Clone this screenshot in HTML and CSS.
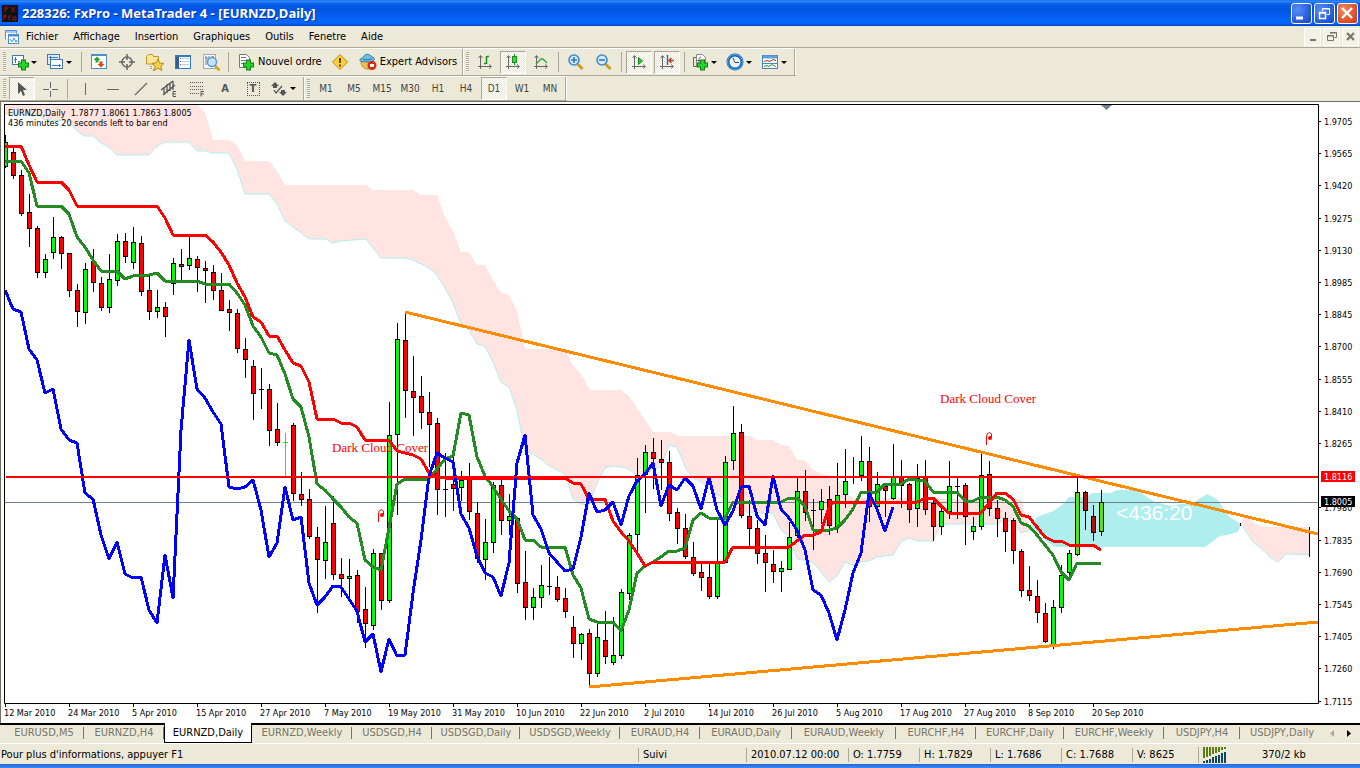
FILE: index.html
```html
<!DOCTYPE html>
<html lang="fr">
<head>
<meta charset="utf-8">
<title>228326: FxPro - MetaTrader 4 - [EURNZD,Daily]</title>
<link rel="stylesheet" href="styles.css">
</head>
<body>
<div class="app">
  <header class="titlebar">
    <svg class="logo" width="16" height="17" viewBox="0 0 16 17"><rect width="16" height="17" fill="#151010"/><path d="M3 7V2h4M3 4h3M9 2l4 5M13 2L9 7" stroke="#8e1c1c" fill="none"/><path d="M2 15v-5h2v2H2M7 15v-4h2M11 12h3v3h-3z" stroke="#8e1c1c" fill="none"/></svg>
    <h1>228326: FxPro - MetaTrader 4 - [EURNZD,Daily]</h1>
    <div class="window-buttons">
      <button aria-label="Minimize"><svg width="21" height="21"><path d="M5 15h7" stroke="#fff" stroke-width="3"/></svg></button>
      <button aria-label="Restore"><svg width="21" height="21"><path d="M8.500 8V5.500h7v6H13M8 6h8" stroke="#fff" fill="none"/><path d="M5.500 9.500h6v6h-6zM5 10h7" stroke="#fff" fill="none" stroke-width="1.500"/></svg></button>
      <button class="close" aria-label="Close"><svg width="21" height="21"><path d="M5 5l10 10M15 5L5 15" stroke="#fff" stroke-width="2.400"/></svg></button>
    </div>
  </header>

  <nav class="menubar">
    <svg class="menu-icon" width="16" height="16" viewBox="0 0 16 16"><path d="M1.500 10.500v-9h11v3M1.500 3h11" fill="#fff" stroke="#4a90d9"/><rect x="4.500" y="5.500" width="10" height="9" fill="#fff" stroke="#4a90d9"/><path d="M4 6.500h11" stroke="#4a90d9" stroke-width="2"/><path d="M6 10l2 3 2-4 2 4 1-2" fill="none" stroke="#4a90d9"/></svg>
    <button>Fichier</button><button>Affichage</button><button>Insertion</button><button>Graphiques</button><button>Outils</button><button>Fenetre</button><button>Aide</button>
    <div class="mdi-buttons">
      <button aria-label="Minimize chart"><svg width="16" height="16"><path d="M5 11h6" stroke="#77756a" stroke-width="2"/></svg></button>
      <button aria-label="Restore chart"><svg width="16" height="16"><path d="M6.500 5V3.500h6v5h-2M6 4h7" stroke="#77756a" fill="none"/><path d="M3.500 6.500h6v5h-6zM3 7h7" stroke="#77756a" fill="none"/></svg></button>
      <button aria-label="Close chart"><svg width="16" height="16"><path d="M4 4l7 7M11 4l-7 7" stroke="#77756a" stroke-width="2.200"/></svg></button>
    </div>
  </nav>

  <div class="toolbar-row">
    <div class="toolbar">
      <i class="grip"></i>
      <button class="tool drop" aria-label="New chart"><svg width="18" height="18"><rect x="1.500" y="2.500" width="11" height="9" fill="#fff" stroke="#3f78b5"/><path d="M4.500 4v6M3 6.500h3M7 8.500h2" stroke="#3f78b5"/><path d="M7 12h11M12.500 6.500v11" stroke="#1a7a1a" stroke-width="5"/><path d="M8 12h9M12.500 7.500v9" stroke="#22d52b" stroke-width="3"/></svg></button>
      <button class="tool drop" aria-label="Profiles"><svg width="18" height="18"><rect x="1.500" y="1.500" width="12" height="10" fill="#dcebfa" stroke="#3f78b5"/><rect x="4.500" y="6.500" width="12" height="9" fill="#fff" stroke="#3f78b5"/><path d="M3 4.500h9M6 12.500h9M4.500 3v3M13.500 11v3" stroke="#3f78b5"/></svg></button>
      <i class="sep"></i>
      <button class="tool" aria-label="Market watch"><svg width="18" height="18"><rect x="1.500" y="1.500" width="15" height="14" fill="#fff" stroke="#4a8fd0"/><path d="M2 2h14" stroke="#4a8fd0" stroke-width="2"/><path d="M5.500 9.500V7H3.500L7 3.500 10.500 7h-2v2.500z" fill="#25a82e"/><path d="M9.500 8.500V11h-2l3.500 3.500 3.500-3.500h-2V8.500z" fill="#e2411e"/></svg></button>
      <button class="tool" aria-label="Data window"><svg width="18" height="18"><circle cx="9" cy="9" r="5" fill="none" stroke="#666" stroke-width="1.500"/><path d="M9 1v6M9 11v6M1 9h6M11 9h6" stroke="#666" stroke-width="1.500"/></svg></button>
      <button class="tool" aria-label="Navigator"><svg width="20" height="19"><path d="M1.500 11V3.500l2-2h4l1 2h5V11z" fill="#f9e59a" stroke="#bd9827"/><path d="M6 13v4M8 17h2" stroke="#555" stroke-dasharray="1 1"/><path d="M13 6l1.700 4 4.300.4-3.200 2.800 1 4.300-3.800-2.300-3.700 2.300 1-4.300L7 10.400l4.300-.4z" fill="#f8d24b" stroke="#b78918"/></svg></button>
      <button class="tool" aria-label="Terminal"><svg width="18" height="18"><rect x="1.500" y="2.500" width="15" height="13" fill="#fff" stroke="#2f7ac5"/><path d="M2 3h14" stroke="#2f7ac5" stroke-width="2"/><path d="M3.500 4v11" stroke="#2b5f9c" stroke-width="3"/><path d="M6 5.500h1M6 8.500h1M6 11.500h1" stroke="#c33"/><path d="M8 5.500h7M8 8.500h7M8 11.500h7" stroke="#b9d3ea"/></svg></button>
      <button class="tool" aria-label="Strategy tester"><svg width="19" height="19"><rect x="1.500" y="1.500" width="12" height="14" fill="#f5f7f9" stroke="#9aaab8"/><path d="M4 3v9M7 3v6M11 3v4M3 5h3M9 4h3" stroke="#6f8190"/><circle cx="10" cy="9" r="4.500" fill="#c5e3f7" stroke="#5c9bcb" stroke-width="1.500"/><path d="M13.500 13l4 4.500" stroke="#d1a321" stroke-width="2.500"/></svg></button>
      <i class="sep"></i>
      <button class="tool wide"><svg width="18" height="18"><path d="M2.500 1.500h7l3 3v10h-10z" fill="#fff" stroke="#777"/><path d="M4 4.500h5M4 7.500h7M4 10.500h3" stroke="#777"/><path d="M6 12h11M11.500 6.500v11" stroke="#1a7a1a" stroke-width="5"/><path d="M7 12h9M11.500 7.500v9" stroke="#22d52b" stroke-width="3"/></svg>Nouvel ordre</button>
      <button class="tool" aria-label="MetaEditor"><svg width="18" height="18"><path d="M9 1.500L16.500 9 9 16.500 1.500 9z" fill="#f8d03a" stroke="#bb8b12"/><path d="M9 5v5M9 11.500v2" stroke="#5d470d" stroke-width="2"/></svg></button>
      <button class="tool wide"><svg width="18" height="18"><path d="M2 8c0 5 3 8 7 8s7-3 6-8z" fill="#efc14b" stroke="#b98a1e"/><path d="M1 6c2-1 3-1 4-3s5-2.500 7 0l3 2c2 2-2 4-7 4S0 8 1 6z" fill="#70bce2" stroke="#3481ad"/><path d="M4 6c3 1.500 6 1 9-.5" fill="none" stroke="#2a6f9c"/><circle cx="13" cy="12.500" r="4.500" fill="#dc2a18"/><rect x="11" y="11" width="4" height="3" fill="#fff"/></svg>Expert Advisors</button>
      <i class="end"></i>
      <i class="grip"></i>
      <button class="tool" aria-label="Bar chart"><svg width="18" height="18"><path d="M4.500 3v13M2 13.500h13M2.500 5l2-2.500 2 2.500M13 11.500l2.500 2-2.500 2" fill="none" stroke="#666"/><path d="M10.500 3v8M11 3.500h2M8 10.500h2" stroke="#17911c" stroke-width="1.500"/></svg></button>
      <button class="tool pressed" aria-label="Candlesticks"><svg width="18" height="18"><path d="M4.500 3v13M2 13.500h13M2.500 5l2-2.500 2 2.500M13 11.500l2.500 2-2.500 2" fill="none" stroke="#666"/><path d="M10.500 1v11" stroke="#17911c"/><rect x="8.500" y="3.500" width="4" height="6" fill="#3bd747" stroke="#17911c"/></svg></button>
      <button class="tool" aria-label="Line chart"><svg width="18" height="18"><path d="M4.500 3v13M2 13.500h13M2.500 5l2-2.500 2 2.500M13 11.500l2.500 2-2.500 2" fill="none" stroke="#666"/><path d="M4 11l5-5h2l4 4" fill="none" stroke="#38a03d" stroke-width="1.300"/></svg></button>
      <i class="sep"></i>
      <button class="tool" aria-label="Zoom in"><svg width="18" height="18"><path d="M10.500 11l5 5" stroke="#cc9d1e" stroke-width="3"/><circle cx="7" cy="7" r="5" fill="#d6ecfb" stroke="#3f8bc8" stroke-width="1.600"/><path d="M4 7h6M7 4v6" stroke="#2f76b4" stroke-width="1.600"/></svg></button>
      <button class="tool" aria-label="Zoom out"><svg width="18" height="18"><path d="M10.500 11l5 5" stroke="#cc9d1e" stroke-width="3"/><circle cx="7" cy="7" r="5" fill="#d6ecfb" stroke="#3f8bc8" stroke-width="1.600"/><path d="M4 7h6" stroke="#2f76b4" stroke-width="1.600"/></svg></button>
      <i class="sep"></i>
      <button class="tool pressed" aria-label="Auto scroll"><svg width="18" height="18"><path d="M4.500 3v13M2 13.500h13M2.500 5l2-2.500 2 2.500M13 11.500l2.500 2-2.500 2" fill="none" stroke="#666"/><path d="M8.500 4.500v7l4-3.500z" fill="#2cc238" stroke="#17911c"/></svg></button>
      <button class="tool pressed" aria-label="Chart shift"><svg width="18" height="18"><path d="M4.500 3v13M2 13.500h13M2.500 5l2-2.500 2 2.500M13 11.500l2.500 2-2.500 2" fill="none" stroke="#666"/><path d="M9.500 2v10" stroke="#2a6cb0" stroke-width="1.500"/><path d="M11 7.500h5M13.500 5L11 7.500l2.500 2.500" stroke="#c3411b" fill="none" stroke-width="1.500"/></svg></button>
      <i class="sep"></i>
      <button class="tool drop" aria-label="Indicators"><svg width="18" height="18"><path d="M5.500 1.500h6l3 3v9h-9z" fill="#fff" stroke="#888"/><path d="M5 4.500H2.500v9H7M10 4c-2 0-2 1-2 3v4M6 7.500h4" fill="none" stroke="#666"/><path d="M6 12h11M11.500 6.500v11" stroke="#1a7a1a" stroke-width="5"/><path d="M7 12h9M11.500 7.500v9" stroke="#22d52b" stroke-width="3"/></svg></button>
      <button class="tool drop" aria-label="Periods"><svg width="18" height="18"><circle cx="9" cy="9" r="7" fill="#e9f5ff" stroke="#1763b5" stroke-width="3"/><circle cx="9" cy="9" r="7.500" fill="none" stroke="#5aa8ea"/><path d="M7 5l2 4.500h4" fill="none" stroke="#444"/></svg></button>
      <button class="tool drop" aria-label="Templates"><svg width="18" height="18"><rect x="1.500" y="2.500" width="15" height="13" fill="#fff" stroke="#4585c0"/><path d="M2 4h14" stroke="#5f9fda" stroke-width="3"/><path d="M2 10.500h14" stroke="#4585c0"/><path d="M3 8.500l3-1 3 1 3-2 3 1" fill="none" stroke="#a13427"/><path d="M3 13.500l3-1 2 1 3-2 4 2" fill="none" stroke="#2c9632"/></svg></button>
      <i class="end"></i>
    </div>
  </div>

  <div class="toolbar-row">
    <div class="toolbar">
      <i class="grip"></i>
      <button class="tool pressed" aria-label="Cursor"><svg width="18" height="18"><path d="M5 2v12l3-3 2 5 2-1-2-5h4z" fill="#555"/></svg></button>
      <button class="tool" aria-label="Crosshair"><svg width="18" height="18"><path d="M9.500 2v6M9.500 11v6M2 9.500h6M11 9.500h6" stroke="#666"/></svg></button>
      <i class="sep"></i>
      <button class="tool" aria-label="Vertical line"><svg width="18" height="18"><path d="M9.500 3v12" stroke="#666"/></svg></button>
      <button class="tool" aria-label="Horizontal line"><svg width="18" height="18"><path d="M3 9.500h12" stroke="#666"/></svg></button>
      <button class="tool" aria-label="Trendline"><svg width="18" height="18"><path d="M3 15L15 3" stroke="#666" stroke-width="1.300"/></svg></button>
      <button class="tool" aria-label="Equidistant channel"><svg width="18" height="18"><path d="M1 10L13 1M3 15L15 5M4 7v8M7 4v9M10 3v8M13 1v9" stroke="#555" stroke-width="1.300"/><path d="M16 11.500h-3v5h3M13 14h3" fill="none" stroke="#555"/></svg></button>
      <button class="tool" aria-label="Fibonacci"><svg width="18" height="18"><path d="M2 2.500h13M2 6.500h13M2 9.500h13M2 13.500h9" stroke="#555" stroke-dasharray="1 1"/><path d="M16 11.500h-3v5M13 14h3" fill="none" stroke="#555"/></svg></button>
      <button class="tool letter">A</button>
      <button class="tool letter boxed" aria-label="Text label"><span>T</span></button>
      <button class="tool drop" aria-label="Arrows"><svg width="18" height="18"><path d="M5 2L1 6h2v2h4V6h2zM13 16l4-4h-2v-2h-4v2H9z" fill="#555"/><path d="M4 10l2 3 6-7" fill="none" stroke="#555" stroke-width="1.300"/></svg></button>
      <i class="end"></i>
      <i class="grip"></i>
      <button class="period">M1</button><button class="period">M5</button><button class="period">M15</button><button class="period">M30</button><button class="period">H1</button><button class="period">H4</button><button class="period pressed">D1</button><button class="period">W1</button><button class="period">MN</button>
      <i class="end"></i>
    </div>
  </div>

  <main class="workspace">
    <svg id="chart" class="chart" viewBox="4 104 1352 616" role="img" aria-label="EURNZD, Daily"></svg>
  </main>

  <nav class="tabs">
    <button class="h4">EURUSD,M5</button><button class="h4">EURNZD,H4</button><button class="daily active">EURNZD,Daily</button><button class="weekly">EURNZD,Weekly</button><button class="h4">USDSGD,H4</button><button class="daily">USDSGD,Daily</button><button class="weekly">USDSGD,Weekly</button><button class="h4">EURAUD,H4</button><button class="daily long">EURAUD,Daily</button><button class="weekly long">EURAUD,Weekly</button><button class="h4">EURCHF,H4</button><button class="daily">EURCHF,Daily</button><button class="weekly">EURCHF,Weekly</button><button class="h4 short">USDJPY,H4</button><button class="daily last">USDJPY,Daily</button>
    <button class="scroll" aria-label="Previous tabs"><svg width="5" height="7"><path d="M4 0v7L0 3.500z" fill="#aaa899"/></svg></button>
    <button class="scroll" aria-label="Next tabs"><svg width="5" height="7"><path d="M1 0v7l4-3.500z" fill="#000"/></svg></button>
  </nav>

  <footer class="status">
    <span class="hint">Pour plus d'informations, appuyer F1</span>
    <span class="profile">Suivi</span>
    <span class="time">2010.07.12 00:00</span>
    <span class="price">O: 1.7759</span>
    <span class="price">H: 1.7829</span>
    <span class="price">L: 1.7686</span>
    <span class="price">C: 1.7688</span>
    <span class="volume">V: 8625</span>
    <span class="traffic"><svg width="24" height="16" viewBox="0 0 24 16"><path d="M1 0v11M4 0v10M7 0v9M10 0v7M13 0v6M16 0v5M19 0v3M22 0v2" stroke="#5d7d12" stroke-width="2"/><path d="M1 14v2M4 13v3M7 12v4M10 10v6M13 9v7M16 8v8M19 6v10M22 5v11" stroke="#12485f" stroke-width="2"/></svg><b>370/2 kb</b></span>
  </footer>
  <div class="taskbar-edge"></div>
</div>
<script src="chart.js"></script>
</body>
</html>
```
FILE: styles.css
```css
* { box-sizing: border-box; }
body {
  margin: 0;
  background: #ece9d8;
  color: #000;
  font: 11px/14px "DejaVu Sans Condensed", "Noto Sans", sans-serif;
}
button {
  margin: 0;
  padding: 0;
  border: 0;
  background: none;
  color: inherit;
  font: inherit;
}
svg { display: block; }
.app { display: flex; flex-direction: column; min-height: 100vh; }

.titlebar {
  display: flex;
  align-items: center;
  gap: 4px;
  height: 26px;
  padding: 0 2px;
  background: linear-gradient(#0a5ce0 0, #3c93ff 1px, #1b78f5 2px, #0459e6 5px, #0054e3 10px, #0560f4 17px, #0568ff 22px, #0460f0 24px, #0240b8 26px);
  color: #fff;
}
.titlebar h1 {
  flex: 1;
  margin: 0;
  font: bold 13px/16px "Noto Sans", sans-serif;
  text-shadow: 1px 1px #0a2f9a;
}
.window-buttons { display: flex; gap: 2px; }
.window-buttons button {
  width: 21px;
  height: 21px;
  border: 1px solid #fff;
  border-radius: 3px;
  background: radial-gradient(circle at 30% 30%, #5b8df5, #2257d8 70%, #1c4ac4);
}
.window-buttons svg { margin: -1px; }
.window-buttons .close { background: radial-gradient(circle at 30% 30%, #ee8865, #dc4c22 70%, #b93a10); }

.menubar {
  display: flex;
  align-items: center;
  height: 22px;
  padding: 0 1px 0 4px;
  border-bottom: 1px solid #aca899;
}
.menu-icon { margin-right: 6px; }
.menubar > button { margin-right: 15px; }
.mdi-buttons { display: flex; gap: 2px; margin-left: auto; }
.mdi-buttons button { border: 1px solid #fff; background: #f3f1e6; }
.mdi-buttons svg { width: 15px; height: 16px; }

.toolbar-row { display: flex; height: 28px; }
.toolbar-row + .toolbar-row { height: 25px; }
.toolbar {
  display: flex;
  align-items: center;
  border-top: 1px solid #fff;
  border-bottom: 1px solid #aca899;
  padding-left: 3px;
}
.grip {
  width: 3px;
  height: 20px;
  margin-right: 3px;
  background: repeating-linear-gradient(#aca899 0 1px, #f6f4ea 1px 2px);
}
.sep { width: 1px; height: 20px; margin: 0 4px 0 2px; background: #aca899; }
.end { align-self: stretch; width: 2px; margin-right: 2px; border-left: 1px solid #aca899; background: #fff; }
.end:last-child { margin-right: 0; }
.tool, .period {
  display: flex;
  align-items: center;
  justify-content: center;
  width: 26px;
  height: 23px;
  margin-right: 2px;
  border: 1px solid transparent;
}
.tool svg { flex: none; }
.drop { width: 33px; gap: 2px; justify-content: flex-start; padding-left: 1px; }
.drop::after {
  content: "";
  border: 3px solid transparent;
  border-top-color: #000;
  border-bottom: 0;
}
.wide { width: auto; gap: 3px; padding: 0 2px 0 3px; white-space: nowrap; }
.pressed {
  border-color: #aca899 #fff #fff #aca899;
  background: repeating-conic-gradient(#fff 0 25%, #ece9d8 0 50%) 0 0 / 2px 2px;
}
.letter { color: #555; font-weight: bold; }
.boxed span { width: 13px; border: 1px dotted #555; line-height: 12px; }
.period { color: #444; font-size: 10px; }

.workspace {
  flex: 1;
  padding: 2px 4px 2px 3px;
  border-top: 1px solid #716f64;
  border-left: 1px solid #716f64;
  background: #fff;
}
.chart { width: 100%; height: auto; }
.cloud-pink { fill: #ffe4e1; }
.cloud-aqua { fill: #afeeee; }
.cloud-edge { fill: none; stroke: #afeeee; }
.line { fill: none; stroke-width: 3; stroke-linejoin: round; }
.axis { stroke: #000; fill: none; }
.label { font: 9px "DejaVu Sans Condensed", "Noto Sans", sans-serif; }
.label-light { fill: #fff; }
.pattern { font: 13px "Liberation Serif", serif; fill: #f00; }
.countdown { font: 21px "Liberation Sans", sans-serif; fill: #fff; }

.tabs {
  display: flex;
  height: 20px;
  padding-left: 4px;
  border-top: 2px solid #000;
  color: #77756a;
}
.tabs button { position: relative; height: 16px; white-space: nowrap; }
.tabs button:not(.active, .scroll, .last)::after {
  content: "";
  position: absolute;
  right: 0;
  top: 2px;
  height: 12px;
  border-right: 1px solid #77756a;
}
.h4 { width: 80px; }
.h4.short { width: 76px; }
.daily { width: 88px; }
.daily.long { width: 92px; }
.weekly { width: 100px; }
.weekly.long { width: 104px; }
.tabs .active {
  height: 20px;
  margin-top: -2px;
  border: 1px solid #000;
  border-top: 0;
  background: #fff;
  color: #000;
}
.tabs .daily.last { flex: 1; max-width: 84px; }
.scroll { display: flex; align-items: center; justify-content: center; width: 16px; }

.status {
  display: flex;
  align-items: center;
  height: 21px;
  padding-top: 2px;
  border-top: 1px solid #fff;
}
.status span { white-space: nowrap; }
.status span + span { border-left: 1px solid #aca899; padding-left: 4px; }
.status .hint { flex: 1; padding-left: 1px; }
.profile { width: 108px; }
.time { width: 102px; }
.price { width: 71px; }
.volume { width: 66px; }
.traffic { display: flex; align-items: center; gap: 35px; width: 162px; }
.traffic b { font-weight: normal; }
.taskbar-edge { height: 4px; background: linear-gradient(#2466d8, #3c8cf0); }
```
FILE: chart.js
```javascript
const svg = document.getElementById("chart");
const NS = "http://www.w3.org/2000/svg";

function add(name, attrs, text) {
  const el = document.createElementNS(NS, name);
  for (const key in attrs) el.setAttribute(key, attrs[key]);
  if (text !== undefined) el.textContent = text;
  svg.appendChild(el);
  return el;
}

const cloudTop = "5,105 197,105 205,112 213,140 229,140 237,145 245,161 269,161 277,171 285,185 366,185 373,190 413,190 421,195 437,195 445,217 453,231 461,252 469,252 477,265 485,265 493,280 501,293 509,295 517,311 525,349 565,349 573,366 581,374 590,390 621,390 629,396 637,408 645,420 653,432 670,432 678,436 750,436 757,440 773,440 781,445 789,446 797,460 805,460 813,470 821,474 830,476 837,477 845,492 853,498 1021,499 1026,517 1031,528";
const cloudBottom = "5,114 37,114 45,120 69,121 77,131 85,136 93,136 101,143 109,147 117,155 149,155 157,146 165,142 189,142 197,151 205,151 213,153 229,153 237,169 245,194 269,194 277,204 285,221 309,239 326,239 333,243 341,241 366,239 381,258 405,258 413,260 429,268 437,275 445,288 453,303 461,324 469,330 477,344 485,346 493,362 501,382 509,387 517,410 525,451 533,454 541,459 549,466 565,474 573,499 581,504 589,505 597,483 605,468 613,466 627,468 637,475 645,475 653,469 661,467 669,445 677,447 685,467 693,478 701,482 709,487 717,495 725,498 730,508 743,510 749,513 773,513 781,530 789,537 797,559 813,562 829,582 837,576 845,562 853,565 861,562 869,561 877,557 893,555 901,542 909,538 917,541 933,541 941,524 997,524 1005,520 1013,521 1021,533 1031,530";

const reversed = s => s.split(" ").reverse().join(" ");
add("polygon", { class: "cloud-pink", "shape-rendering": "crispEdges", points: cloudTop + " " + reversed(cloudBottom) });
add("polyline", { class: "cloud-edge", points: cloudBottom });
add("polygon", { class: "cloud-aqua", points: "1029,530 1037,517 1045,514 1053,511 1061,506 1069,497 1085,497 1093,493 1110,493 1117,490 1137,490 1147,497 1153,501 1163,504 1172,506 1180,504 1193,503 1207,494 1218,500 1228,516 1241,524 1238,532 1227,535 1220,536 1205,547 1055,547 1047,542 1038,532" });
add("polygon", { class: "cloud-pink", points: "1241,524 1243,518 1247,516 1254,523 1263,527 1309,527 1309,556 1286,554 1278,562 1270,557 1262,549 1253,542 1247,533" });
add("polyline", { class: "cloud-edge", points: "1241,524 1247,533 1253,542 1262,549 1270,557 1278,562 1286,554 1309,554" });
add("path", { class: "axis", d: "M1309.5 527V557M1240.500 523v3" });
add("path", { d: "M4 502.500H1318", stroke: "#708090" });

/* color, high, body top, body bottom, low; one bar every 8 units */
const bars = `g135,142,166,167 r148,152,175,178 r170,175,213,215 r194,212,228,246 r226,228,272,277 g254,259,272,277 g217,237,252,258 r236,237,253,268
r253,253,290,296 r284,290,311,326 g263,269,312,323 r249,261,282,291 r277,283,307,310 g254,279,307,312 g234,241,280,285 r233,241,256,262
g227,242,262,268 r236,243,291,295 r276,290,311,319 g290,307,311,317 r302,307,316,336 g258,263,283,294 r249,264,266,280 g237,258,265,269
r256,259,267,291 r261,268,270,302 r265,272,290,299 r273,290,310,310 r300,309,312,330 r309,313,348,352 r338,349,359,377 r360,366,393,419
k368,389,389,408 r384,389,430,445 r403,429,442,445 l433,442,442,475 r423,425,493,500 r472,494,499,505 r489,499,536,538 r527,537,559,612
g506,542,560,578 r496,523,574,579 r558,574,578,596 g559,576,578,598 r570,575,611,622 r587,609,623,647 g549,553,625,629 r553,553,600,609
g402,435,600,602 g323,339,434,514 r312,340,390,417 r356,391,397,435 r376,396,412,428 r392,412,424,466 r418,423,489,514 k453,489,489,516
r446,484,488,510 g471,480,487,500 r463,478,511,519 r502,513,558,562 g519,542,559,579 g482,485,542,552 r480,485,520,534 g494,516,520,534
r518,518,583,592 r551,582,607,619 g588,597,607,619 g565,585,597,607 k557,586,586,594 r576,587,599,601 r588,598,611,617 r616,627,643,657
g633,634,643,659 r629,633,673,687 g623,637,673,676 r611,640,656,663 g617,655,662,664 g589,592,655,658 g533,535,593,599 g458,475,534,550
g445,452,474,512 r438,452,458,488 r440,459,462,489 r451,462,513,520 r508,512,528,543 r514,528,556,558 r542,557,573,575 r563,572,577,590
r563,577,596,598 g518,563,596,598 g456,462,562,562 g406,433,460,469 r424,432,515,517 r500,516,528,547 r520,528,553,563 r535,553,562,591
r550,564,571,582 g561,568,571,591 g522,537,569,569 g478,491,535,537 r470,491,512,520 k499,510,510,549 g489,501,509,523 r486,499,525,534
g463,495,527,532 g449,481,494,507 k457,476,476,483 g436,461,475,480 r447,461,506,521 g472,484,506,507 r483,486,490,516 g444,477,498,499
r460,477,485,507 r483,484,509,522 g464,478,508,526 r460,477,509,514 r500,503,526,540 g507,511,526,534 g461,486,511,518 k477,486,486,518
r483,485,516,544 g517,526,531,539 g453,475,526,529 r461,474,508,515 r500,508,518,536 r512,518,531,551 r518,520,550,563 r549,551,590,596
r566,590,595,600 r580,596,612,622 r603,613,641,642 g600,607,645,648 g565,575,607,612 g550,553,572,577 G477,492,554,555 R491,492,510,529
R505,516,532,540 G490,502,531,535`.split(/\s+/);
const fills = { g: "#00ff00", r: "#ff0000", G: "#50e411", R: "#b01111" };

bars.forEach((bar, i) => {
  const x = 5 + i * 8;
  const kind = bar[0];
  const [high, top, bottom, low] = bar.slice(1).split(",").map(Number);
  const ink = kind === "l" ? "#00ff00" : "#000";
  add("path", { d: `M${x + 0.5} ${high}V${low + 1}`, stroke: ink });
  if (fills[kind]) {
    add("rect", { x: x - 1.5, y: top + 0.5, width: 4, height: Math.max(bottom - top, 1), fill: fills[kind], stroke: "#000" });
  } else {
    add("path", { d: `M${x - 2} ${top + 0.5}h5`, stroke: ink });
  }
});

const kijun = "5,146 21,146 29,165 37,182 61,182 69,190 77,206 157,206 165,218 173,235 205,235 213,242 221,252 229,265 237,283 245,297 253,317 261,322 269,336 277,336 285,350 293,363 301,366 309,382 317,419 333,419 341,423 349,423 357,427 365,440 389,440 397,451 405,453 413,455 421,459 429,473 437,477 445,478 565,478 573,483 581,484 589,499 605,499 613,521 621,532 629,541 637,553 645,566 653,562 725,562 733,547 789,547 797,541 805,535 813,535 821,532 829,507 833,502 917,502 925,498 933,498 941,506 949,513 981,513 989,503 997,493 1005,493 1013,499 1021,515 1029,517 1037,527 1045,537 1053,541 1061,541 1069,545 1093,545 1101,550";
const tenkan = "5,161 21,161 29,173 37,206 61,206 69,214 77,237 85,247 93,260 101,271 117,271 125,279 133,276 149,275 157,273 165,281 197,281 205,284 229,284 237,293 245,305 253,326 261,337 269,353 277,355 285,374 293,399 301,407 309,437 317,484 325,490 333,499 341,507 349,517 357,523 365,560 373,567 381,570 389,528 397,484 405,479 429,479 437,469 445,459 453,456 461,413 469,415 477,457 485,476 493,487 501,499 509,511 517,519 525,540 533,540 541,547 565,547 573,575 581,588 589,619 597,622 613,622 621,631 629,610 637,573 645,566 653,562 661,557 669,551 677,551 685,548 693,520 701,513 709,518 725,518 733,502 781,502 789,498 797,498 805,506 813,530 829,530 837,528 845,520 853,509 861,492 869,492 877,492 885,484 901,484 909,479 925,481 933,492 957,492 965,501 973,501 981,497 997,497 1005,500 1013,506 1021,523 1029,526 1037,535 1045,545 1053,555 1061,572 1069,580 1077,563 1101,563";
const chikou = "5,290 13,309 21,312 29,349 37,360 45,393 53,389 61,429 69,440 77,443 85,493 93,499 101,535 109,559 117,542 125,574 133,578 141,577 149,610 157,623 165,555 173,598 181,430 189,340 197,389 205,398 213,412 221,424 229,487 237,489 245,487 253,480 261,510 269,557 277,543 285,487 293,520 301,517 309,583 317,605 325,597 333,586 341,587 349,599 357,611 365,642 373,634 381,672 389,639 397,656 405,655 413,593 421,540 429,476 437,453 445,458 453,462 461,514 469,528 477,556 485,573 493,577 501,596 509,563 517,463 525,435 533,515 541,529 549,553 557,562 565,571 573,569 581,537 589,493 597,512 605,510 613,502 621,525 629,496 637,481 645,474 653,463 661,506 669,485 677,490 685,478 693,486 701,509 709,477 717,510 725,525 733,511 741,487 749,486 757,516 765,525 773,476 781,509 789,518 797,530 805,550 813,590 821,595 829,613 837,640 845,610 853,573 861,553 869,493 877,509 885,531 893,507";
const line = (points, stroke) => add("polyline", { class: "line", "shape-rendering": "crispEdges", points, stroke });
line(tenkan, "#228b22");
line(kijun, "#ff0000");
line(chikou, "#0000ff");
line("405,312 1318,534", "#ff8c00");
line("589,687 1318,622", "#ff8c00");
add("path", { d: "M6 477H1318", stroke: "#f00", "stroke-width": 2 });

for (const [x, y] of [[986, 432], [378, 509]]) {
  add("path", { d: `M${x + 0.500} ${y + 13}v-8q0-4 3-4.500 3 .5 2 5`, fill: "none", stroke: "#f00" });
  add("circle", { cx: x + 4, cy: y + 6, r: 2, fill: "#f00" });
}
add("text", { class: "pattern", x: 940, y: 403 }, "Dark Cloud Cover");
add("text", { class: "pattern", x: 332, y: 452 }, "Dark Cloud Cover");
add("text", { class: "countdown", x: 1116, y: 520 }, "<436:20");
add("text", { class: "label", x: 8, y: 116 }, "EURNZD,Daily \u00a01.7877 1.8061 1.7863 1.8005");
add("text", { class: "label", x: 8, y: 126 }, "436 minutes 20 seconds left to bar end");

add("path", { class: "axis", d: "M4 104.500H1318.500V703.500H4.500V104" });
add("path", { d: "M1101 105h11l-5.500 5z", fill: "#708090" });

const prices = ["1.9705", "1.9565", "1.9420", "1.9275", "1.9130", "1.8985", "1.8845", "1.8700", "1.8555", "1.8410", "1.8265", "", "1.7980", "1.7835", "1.7690", "1.7545", "1.7405", "1.7260", "1.7115"];
prices.forEach((price, i) => {
  if (!price) return;
  const y = Math.round(121 + i * 32.200);
  add("path", { class: "axis", d: `M1318 ${y + 0.500}h3` });
  add("text", { class: "label", x: 1324, y: y + 4 }, price);
});
for (const [y, fill, price] of [[471, "#f00", "1.8116"], [496, "#000", "1.8005"]]) {
  add("rect", { x: 1321, y, width: 34, height: 11, fill });
  add("text", { class: "label label-light", x: 1324, y: y + 9 }, price);
}

const dates = ["12 Mar 2010", "24 Mar 2010", "5 Apr 2010", "15 Apr 2010", "27 Apr 2010", "7 May 2010", "19 May 2010", "31 May 2010", "10 Jun 2010", "22 Jun 2010", "2 Jul 2010", "14 Jul 2010", "26 Jul 2010", "5 Aug 2010", "17 Aug 2010", "27 Aug 2010", "8 Sep 2010", "20 Sep 2010"];
dates.forEach((date, i) => {
  add("path", { class: "axis", d: `M${5.500 + i * 64} 704v3` });
  add("text", { class: "label", x: 4 + i * 64, y: 716 }, date);
});
```
